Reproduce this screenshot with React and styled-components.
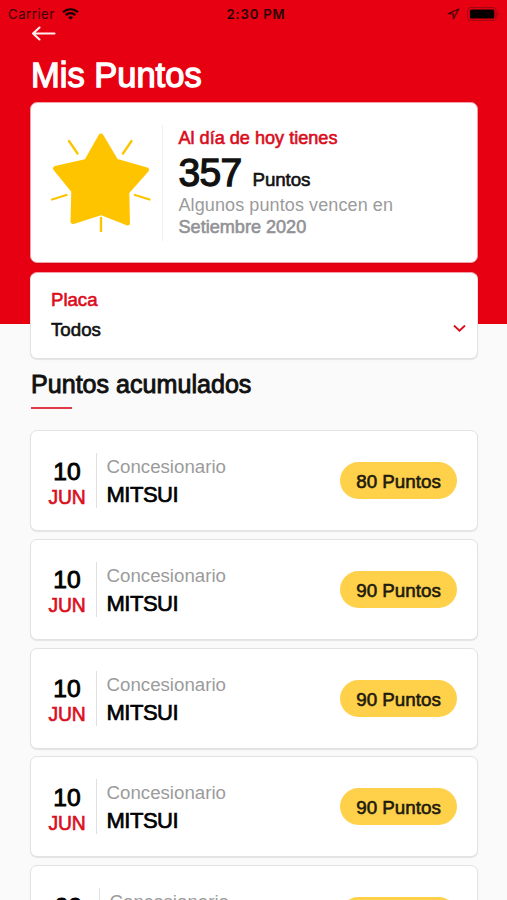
import React from "react";
import styled, { createGlobalStyle } from "styled-components";

const GlobalStyle = createGlobalStyle`
  * { box-sizing: border-box; }
  body { margin: 0; background: #fafafa; }
`;

const Screen = styled.div`
  width: 507px;
  height: 900px;
  overflow: hidden;
  font-family: "Liberation Sans", Arial, sans-serif;
  background: linear-gradient(#e60012 324px, #fafafa 324px);
`;

const StatusBar = styled.div`
  height: 26px;
  padding: 2px 7px 0 8px;
  display: grid;
  grid-template-columns: 1fr auto 1fr;
  align-items: center;
  font-family: Inter, sans-serif;
  font-size: 13.2px;
  color: #3c0207;
`;

const StatusSide = styled.div`
  display: flex;
  align-items: center;
  gap: 7px;
  letter-spacing: 0.5px;
  justify-content: ${(p) => (p.$end ? "flex-end" : "flex-start")};
`;

const Clock = styled.div`
  font-weight: 600;
  letter-spacing: 0.75px;
  margin-left: 4px;
  color: #2a0104;
`;

const NavBar = styled.div`
  height: 30px;
  padding: 0 0 0 31px;
`;

const BackIcon = styled.svg`
  display: block;
`;

const Text = styled.div`
  font-size: ${(p) => p.$size}px;
  line-height: ${(p) => p.$line}px;
  color: ${(p) => p.$color || "#111"};
  letter-spacing: ${(p) => p.$spacing || 0}px;
  -webkit-text-stroke: ${(p) => p.$stroke ?? 0.6}px currentColor;
  white-space: nowrap;
`;

const Title = styled(Text).attrs({ as: "h1" })`
  margin: 0 0 7px 31px;
  font-weight: 400;
`;

const Card = styled.section`
  width: 448px;
  margin-left: 30px;
  background: #fff;
  border: 1.5px solid #e2e2e2;
  border-radius: 7px;
  box-shadow: 0 1px 1px rgba(0, 0, 0, 0.09);
`;

const SummaryCard = styled(Card)`
  height: 161px;
  padding: 19px 20px;
  display: flex;
  align-items: center;
  border-color: #f0a0a6;
`;

const Star = styled.svg`
  width: 100px;
  height: 102px;
  flex: none;
  margin-top: -3px;
`;

const SummaryText = styled.div`
  height: 116px;
  margin-left: 11px;
  padding: 2px 0 0 15.5px;
  border-left: 1px solid #f0f0f0;
`;

const Total = styled.div`
  display: flex;
  align-items: baseline;
  gap: 11px;
`;

const FilterCard = styled(Card)`
  height: 87px;
  margin-top: 9px;
  padding: 12px 11px 0 20px;
  border-top-color: #f0a0a6;
`;

const SelectRow = styled.div`
  display: flex;
  align-items: center;
  justify-content: space-between;
`;

const Heading = styled.div`
  margin-left: 31px;
  height: 71px;
  padding-top: 10px;
`;

const Underline = styled.div`
  width: 41px;
  height: 1.5px;
  margin-top: 8px;
  background: #e03a48;
`;

const List = styled.div`
  display: flex;
  flex-direction: column;
  gap: 7.75px;
`;

const RowCard = styled(Card)`
  height: 101px;
  flex: none;
  padding: 0 20px 0 17px;
  display: flex;
  align-items: center;
`;

const DateBox = styled.div`
  width: ${(p) => (p.$wide ? 41 : 38)}px;
  display: flex;
  flex-direction: column;
  align-items: center;
  padding-top: 4px;
`;

const Details = styled.div`
  height: 55px;
  margin-left: 10px;
  padding-left: 9.5px;
  border-left: 1px solid #e0e0e0;
`;

const Badge = styled.div`
  width: 117px;
  height: 37px;
  margin-left: auto;
  border-radius: 19px;
  background: #ffd14a;
  display: flex;
  justify-content: center;
  padding-top: 1px;
`;

const rows = [
  { day: "10", month: "JUN", points: 80 },
  { day: "10", month: "JUN", points: 90 },
  { day: "10", month: "JUN", points: 90 },
  { day: "10", month: "JUN", points: 90 },
  { day: "09", month: "MAY", points: 90, wide: true },
];

function WifiIcon() {
  return (
    <svg width="17" height="12" viewBox="0 0 17 12" fill="none" stroke="#180003" strokeWidth="2.2">
      <path d="M1 4.3C5.2.2 11.8.2 16 4.3" />
      <path d="M3.7 7.1c2.7-2.6 6.9-2.6 9.6 0" />
      <path d="M8.5 11.8 6 9.2c1.4-1.3 3.6-1.3 5 0z" fill="#180003" stroke="none" />
    </svg>
  );
}

function LocationIcon() {
  return (
    <svg width="13" height="12" viewBox="0 0 13 12" fill="none" stroke="#500208" strokeWidth="1.3" strokeLinejoin="round">
      <path d="M11.8 1 1.2 5.6l5 .2.3 4.8z" />
    </svg>
  );
}

function BatteryIcon() {
  return (
    <svg width="33" height="14" viewBox="0 0 33 14">
      <rect x=".6" y=".6" width="28.5" height="12.8" rx="3" fill="none" stroke="#9b0711" />
      <rect x="2.9" y="2.5" width="24.4" height="9" rx="1.5" fill="#080000" />
      <path d="M30.5 5q2 2 0 4z" fill="#8b0610" />
    </svg>
  );
}

function StarArt() {
  return (
    <Star viewBox="0 0 100 102" fill="none" stroke="#ffc400" strokeLinecap="round" strokeLinejoin="round">
      <path
        d="M50 6 65 31.2 95.5 39.8 75.8 62 76.5 93 50 82.5 22 91.5 22.8 61 4.5 38.5 35.5 31.5Z"
        fill="#ffc400"
        strokeWidth="5"
      />
      <path d="m18 11 8.5 12.5M80.5 11 72 23.5M1 69.5 15.5 65M84 65l14.5 4.5M50 88V103" strokeWidth="2.3" />
    </Star>
  );
}

export default function App() {
  return (
    <>
      <GlobalStyle />
      <Screen>
        <StatusBar>
          <StatusSide>
            Carrier
            <WifiIcon />
          </StatusSide>
          <Clock>2:30 PM</Clock>
          <StatusSide $end>
            <LocationIcon />
            <BatteryIcon />
          </StatusSide>
        </StatusBar>
        <NavBar>
          <BackIcon width="26" height="16" viewBox="0 0 26 16" fill="none" stroke="#ffeef0" strokeWidth="2.1" strokeLinecap="round" strokeLinejoin="round">
            <path d="M23.5 7.5H2M8.5 1.5 2 7.5l6.5 6" />
          </BackIcon>
        </NavBar>
        <Title $size={34.5} $line={39} $color="#fff" $stroke={1.3}>Mis Puntos</Title>

        <SummaryCard>
          <StarArt />
          <SummaryText>
            <Text $size={18.1} $line={23} $color="#d90d1c">Al día de hoy tienes</Text>
            <Total>
              <Text $size={39} $line={45} $spacing={-0.7} $stroke={1.3}>357</Text>
              <Text $size={18.8} $line={24} $spacing={-0.1}>Puntos</Text>
            </Total>
            <Text $size={18} $line={21} $spacing={0.1} $color="#9b9b9b" $stroke={0}>Algunos puntos vencen en</Text>
            <Text $size={18.1} $line={23} $color="#929296">Setiembre 2020</Text>
          </SummaryText>
        </SummaryCard>

        <FilterCard>
          <Text $size={18.6} $line={29} $color="#dc0d1c">Placa</Text>
          <SelectRow>
            <Text $size={18.7} $line={31}>Todos</Text>
            <svg width="13" height="10" viewBox="0 0 13 10" fill="none" stroke="#d90d1c" strokeWidth="1.9">
              <path d="m1 .5 5.5 5.3L12 .5" />
            </svg>
          </SelectRow>
        </FilterCard>

        <Heading>
          <Text $size={25.1} $line={30} $stroke={0.9}>Puntos acumulados</Text>
          <Underline />
        </Heading>

        <List>
          {rows.map((row, index) => (
            <RowCard key={index}>
              <DateBox $wide={row.wide}>
                <Text $size={24.6} $line={29} $color="#000" $stroke={0.9}>{row.day}</Text>
                <Text $size={19.3} $line={23} $color="#dc0d1c" $spacing={-0.2}>{row.month}</Text>
              </DateBox>
              <Details>
                <Text $size={18.7} $line={27} $color="#9b9b9b" $stroke={0}>Concesionario</Text>
                <Text $size={22} $line={29} $color="#000" $spacing={-0.5} $stroke={0.7}>MITSUI</Text>
              </Details>
              <Badge>
                <Text $size={18.8} $line={37} $color="#1d1a0e">{row.points} Puntos</Text>
              </Badge>
            </RowCard>
          ))}
        </List>
      </Screen>
    </>
  );
}
